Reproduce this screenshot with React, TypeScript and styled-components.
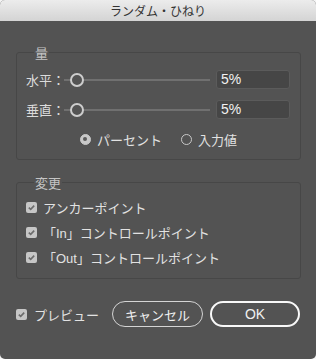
import styled, { createGlobalStyle } from 'styled-components';

const GlobalStyle = createGlobalStyle`
    html, body {
        margin: 0;
        padding: 0;
        background: #f4f4f4;
    }
    body {
        font-family: "Liberation Sans", "Noto Sans CJK JP", sans-serif;
    }
`;

const Dialog = styled.div`
    width: 316px;
    height: 359px;
    background: #535353;
    border-radius: 5px;
    overflow: hidden;
    display: flex;
    flex-direction: column;
`;

const TitleBar = styled.div`
    height: 21px;
    background: linear-gradient(#ececec, #d4d4d4);
    color: #333;
    font-size: 12px;
    font-family: "Noto Sans CJK JP", sans-serif;
    display: flex;
    align-items: center;
    justify-content: center;
`;

const Content = styled.div`
    padding: 24px 15px 0 16px;
    display: flex;
    flex-direction: column;
`;

const Group = styled.fieldset<{ $gap: number; $top: number; $bottom: number }>`
    margin: 0;
    min-width: 0;
    border: 1px solid #474747;
    border-radius: 3px;
    padding: ${(p) => p.$top}px 10px ${(p) => p.$bottom}px 9px;
    display: flex;
    flex-direction: column;
    gap: ${(p) => p.$gap}px;
    & + & {
        margin-top: 15px;
    }
`;

const Legend = styled.legend`
    padding: 0 1px;
    margin-left: 8px;
    font-size: 13px;
    line-height: 15px;
    color: #c4c4c4;
    font-family: "Noto Sans CJK JP", sans-serif;
`;

const SliderRow = styled.div`
    display: flex;
    align-items: center;
    height: 19px;
`;

const RowLabel = styled.span`
    font-size: 13px;
    color: #dcdcdc;
    font-family: "Noto Sans CJK JP", sans-serif;
    white-space: nowrap;
`;

const Track = styled.div`
    position: relative;
    flex: 1;
    height: 2px;
    background: #707070;
    margin: 0 6px 0 -1px;
`;

const Knob = styled.div`
    position: absolute;
    top: -6px;
    width: 10px;
    height: 10px;
    border-radius: 50%;
    border: 2px solid #cdcdcd;
    background: #535353;
`;

const ValueInput = styled.div`
    width: 68px;
    height: 17px;
    border: 1px solid #5b5b5b;
    border-radius: 3px;
    background: #464646;
    color: #f2f2f2;
    font-size: 14px;
    line-height: 17px;
    padding-left: 4px;
`;

const RadioRow = styled.div`
    display: flex;
    justify-content: center;
    align-items: center;
    gap: 19px;
    height: 20px;
    margin-top: -1px;
    padding-left: 1px;
`;

const Option = styled.label`
    display: flex;
    align-items: center;
    gap: 6px;
    font-size: 13px;
    color: #e2e2e2;
    font-family: "Noto Sans CJK JP", sans-serif;
`;

const Radio = styled.span<{ $on?: boolean }>`
    width: 11px;
    height: 11px;
    box-sizing: border-box;
    border-radius: 50%;
    border: 1px solid #c8c8c8;
    background: ${(p) => (p.$on ? '#c8c8c8' : 'transparent')};
    display: flex;
    align-items: center;
    justify-content: center;
    &::after {
        content: '';
        display: ${(p) => (p.$on ? 'block' : 'none')};
        width: 4px;
        height: 4px;
        border-radius: 50%;
        background: #5a5a5a;
    }
`;

const CheckRow = styled.label`
    display: flex;
    align-items: center;
    gap: 6px;
    height: 18px;
    font-size: 13px;
    color: #e2e2e2;
    font-family: "Liberation Sans", "Noto Sans CJK JP", sans-serif;
    white-space: nowrap;
`;

const Box = styled.span`
    width: 11px;
    height: 11px;
    border-radius: 2px;
    background: #c6c6c6;
    display: flex;
    align-items: center;
    justify-content: center;
    flex-shrink: 0;
`;

const Footer = styled.div`
    display: flex;
    align-items: center;
    margin-top: 22px;
    height: 26px;
    padding-right: 1px;
`;

const Preview = styled(CheckRow)`
    flex: 1;
    gap: 7px;
`;

const Button = styled.button<{ $primary?: boolean }>`
    height: 26px;
    width: ${(p) => (p.$primary ? 90 : 91)}px;
    border-radius: 13px;
    background: transparent;
    border: ${(p) => (p.$primary ? '2px solid #f8f8f8' : '1px solid #d4d4d4')};
    color: #f0f0f0;
    font-size: ${(p) => (p.$primary ? 14 : 13)}px;
    font-family: "Liberation Sans", "Noto Sans CJK JP", sans-serif;
    padding: 0;
    & + & {
        margin-left: 7px;
    }
`;

const Check = () => (
    <Box>
        <svg width="9" height="9" viewBox="0 0 9 9">
            <path d="M1.8 4.6 L3.7 6.4 L7.2 2.6" fill="none" stroke="#6c6c6c" strokeWidth="1.6" />
        </svg>
    </Box>
);

const Slider = ({ label, value }: { label: string; value: number }) => (
    <SliderRow>
        <RowLabel>{label}</RowLabel>
        <Track>
            <Knob style={{ left: `calc(${value / 100} * (100% - 14px) - 1px)` }} />
        </Track>
        <ValueInput>{value}%</ValueInput>
    </SliderRow>
);

export default function App() {
    return (
        <>
            <GlobalStyle />
            <Dialog>
                <TitleBar>ランダム・ひねり</TitleBar>
                <Content>
                    <Group $gap={11} $top={10} $bottom={10}>
                        <Legend>量</Legend>
                        <Slider label="水平：" value={5} />
                        <Slider label="垂直：" value={5} />
                        <RadioRow>
                            <Option>
                                <Radio $on />
                                パーセント
                            </Option>
                            <Option>
                                <Radio />
                                入力値
                            </Option>
                        </RadioRow>
                    </Group>
                    <Group $gap={7} $top={8} $bottom={12}>
                        <Legend>変更</Legend>
                        <CheckRow>
                            <Check />
                            アンカーポイント
                        </CheckRow>
                        <CheckRow>
                            <Check />
                            「In」コントロールポイント
                        </CheckRow>
                        <CheckRow>
                            <Check />
                            「Out」コントロールポイント
                        </CheckRow>
                    </Group>
                    <Footer>
                        <Preview>
                            <Check />
                            プレビュー
                        </Preview>
                        <Button>キャンセル</Button>
                        <Button $primary>OK</Button>
                    </Footer>
                </Content>
            </Dialog>
        </>
    );
}
